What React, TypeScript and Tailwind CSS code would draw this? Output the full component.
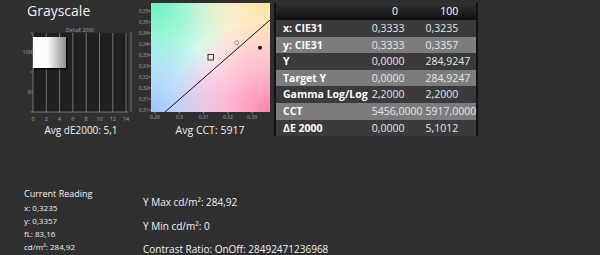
import React from 'react';

const rows: { label: string; a: string; b: string }[] = [
    { label: 'x: CIE31', a: '0,3333', b: '0,3235' },
    { label: 'y: CIE31', a: '0,3333', b: '0,3357' },
    { label: 'Y', a: '0,0000', b: '284,9247' },
    { label: 'Target Y', a: '0,0000', b: '284,9247' },
    { label: 'Gamma Log/Log', a: '2,2000', b: '2,2000' },
    { label: 'CCT', a: '5456,0000', b: '5917,0000' },
    { label: 'ΔE 2000', a: '0,0000', b: '5,1012' },
];

const gridX = [0, 2, 4, 6, 8, 10, 12, 14];
const cieY = ['0,35', '0,35', '0,34', '0,34', '0,33', '0,33', '0,32', '0,32', '0,31', '0,31'];
const cieX = ['0,29', '0,3', '0,31', '0,32', '0,33'];

function DeltaChart(): React.ReactElement {
    return (
        <svg width="134" height="101" viewBox="0 0 134 101" className="block">
            <defs>
                <linearGradient id="barFill" x1="0" y1="0" x2="1" y2="0">
                    <stop offset="0" stopColor="#ffffff" />
                    <stop offset="0.45" stopColor="#fbfbfb" />
                    <stop offset="1" stopColor="#8c8c8c" />
                </linearGradient>
            </defs>
            <text x="80" y="11" fontSize="5" fill="#9a9a9a" textAnchor="middle" fontFamily="Open Sans, sans-serif">
                DeltaE 2000
            </text>
            <rect x="33" y="12" width="95" height="79" fill="#1f1f1f" />
            {gridX.map((v, i) => {
                const x = 33 + i * 13.3;
                return (
                    <g key={v}>
                        <line x1={x} y1="12" x2={x} y2="91" stroke="#8a8a8a" strokeWidth="0.8" />
                        <text x={x} y="99.5" fontSize="5.5" fill="#a8a8a8" textAnchor="middle" fontFamily="Open Sans, sans-serif">
                            {v}
                        </text>
                    </g>
                );
            })}
            <line x1="131" y1="11" x2="131" y2="91" stroke="#8a8a8a" strokeWidth="0.8" />
            <line x1="33" y1="91" x2="128" y2="91" stroke="#8a8a8a" strokeWidth="0.8" />
            {[12, 31, 51, 71, 91].map((y) => (
                <line key={y} x1="30.5" y1={y} x2="33" y2={y} stroke="#8a8a8a" strokeWidth="0.8" />
            ))}
            <text x="32" y="33" fontSize="5.5" fill="#a8a8a8" textAnchor="end" fontFamily="Open Sans, sans-serif">100</text>
            <text x="31" y="73" fontSize="5.5" fill="#a8a8a8" textAnchor="end" fontFamily="Open Sans, sans-serif">0</text>
            <rect x="34" y="17" width="33.5" height="31.5" fill="#050505" />
            <rect x="33" y="16" width="33" height="31" fill="url(#barFill)" />
        </svg>
    );
}

function CieChart(): React.ReactElement {
    return (
        <svg width="140" height="122" viewBox="0 0 140 122" className="block">
            <defs>
                <radialGradient id="cTL" cx="0" cy="0" r="1">
                    <stop offset="0" stopColor="#6ef2bf" stopOpacity="1" />
                    <stop offset="0.8" stopColor="#6ef2bf" stopOpacity="0" />
                </radialGradient>
                <radialGradient id="cTR" cx="1" cy="0" r="1">
                    <stop offset="0" stopColor="#ffe2a2" stopOpacity="1" />
                    <stop offset="0.75" stopColor="#ffe2a2" stopOpacity="0" />
                </radialGradient>
                <radialGradient id="cBL" cx="0" cy="1" r="1">
                    <stop offset="0" stopColor="#a2c4ff" stopOpacity="1" />
                    <stop offset="0.7" stopColor="#a2c4ff" stopOpacity="0" />
                </radialGradient>
                <radialGradient id="cBR" cx="1" cy="1" r="1">
                    <stop offset="0" stopColor="#ff84b0" stopOpacity="1" />
                    <stop offset="0.85" stopColor="#ff84b0" stopOpacity="0" />
                </radialGradient>
                <linearGradient id="cL" x1="0" y1="0" x2="1" y2="0">
                    <stop offset="0" stopColor="#aefcf6" stopOpacity="0.6" />
                    <stop offset="0.45" stopColor="#aefcf6" stopOpacity="0" />
                </linearGradient>
            </defs>
            <rect x="17" y="3" width="119" height="109" fill="#ffffff" />
            <rect x="17" y="3" width="119" height="109" fill="url(#cL)" />
            <rect x="17" y="3" width="119" height="109" fill="url(#cTL)" />
            <rect x="17" y="3" width="119" height="109" fill="url(#cTR)" />
            <rect x="17" y="3" width="119" height="109" fill="url(#cBL)" />
            <rect x="17" y="3" width="119" height="109" fill="url(#cBR)" />
            {cieY.map((t, i) => {
                const y = 11 + i * 11;
                return (
                    <g key={i}>
                        <line x1="14.5" y1={y} x2="17" y2={y} stroke="#9a9a9a" strokeWidth="0.8" />
                        <text x="14.5" y={y + 1.8} fontSize="5" fill="#a8a8a8" textAnchor="end" fontFamily="Open Sans, sans-serif">
                            {t}
                        </text>
                    </g>
                );
            })}
            {cieX.map((t, i) => {
                const x = 21 + i * 24.3;
                return (
                    <g key={t}>
                        <line x1={x} y1="112" x2={x} y2="114" stroke="#9a9a9a" strokeWidth="0.8" />
                        <text x={x} y="118.8" fontSize="5" fill="#a8a8a8" textAnchor="middle" fontFamily="Open Sans, sans-serif">
                            {t}
                        </text>
                    </g>
                );
            })}
            <line x1="31" y1="112" x2="136" y2="20" stroke="#111111" strokeWidth="1" />
            <rect x="74" y="54.5" width="5.5" height="5.5" fill="none" stroke="#222222" strokeWidth="0.9" />
            <circle cx="102.7" cy="42.7" r="2" fill="none" stroke="#8a8a8a" strokeWidth="0.9" />
            <circle cx="126" cy="47.7" r="2" fill="#111111" />
        </svg>
    );
}

export default function App(): React.ReactElement {
    return (
        <div className="w-[600px] h-[255px] overflow-hidden bg-[#2f2f2f] text-[#f2f2f2] font-['Open_Sans',sans-serif]">
            <div className="flex items-start h-[140px]">
                <div className="w-[134px] shrink-0">
                    <div className="h-[21px] pl-[27px] pt-[2px] text-[14px] leading-[18px]">Grayscale</div>
                    <DeltaChart />
                    <div className="h-[16px] text-center text-[10px] leading-[16px] pl-[28px]">Avg dE2000: 5,1</div>
                </div>
                <div className="w-[140px] shrink-0">
                    <CieChart />
                    <div className="h-[16px] text-center text-[10.5px] leading-[16px] pl-[12px]">Avg CCT: 5917</div>
                </div>
                <table className="mt-[3px] w-[203px] border-collapse border-x-2 border-[#111111] text-[10.5px] leading-[16.6px]">
                    <thead>
                        <tr className="h-[17px] bg-gradient-to-b from-[#333333] to-[#0e0e0e]">
                            <th className="w-[96px]" />
                            <th className="w-[54px] text-center font-normal text-white">0</th>
                            <th className="w-[53px] text-center font-normal text-white">100</th>
                        </tr>
                    </thead>
                    <tbody>
                        {rows.map((r, i) => (
                            <tr
                                key={r.label}
                                className={i % 2 === 0 ? 'h-[16.6px] bg-[#3a3a3a]' : 'h-[16.6px] bg-[#7c7c7c]'}
                            >
                                <td className="pl-[7px] font-bold text-white whitespace-nowrap">{r.label}</td>
                                <td className="pl-[4px] text-[#e6e6e6] whitespace-nowrap">{r.a}</td>
                                <td className="pl-[3px] text-[#e6e6e6] whitespace-nowrap">{r.b}</td>
                            </tr>
                        ))}
                    </tbody>
                </table>
            </div>
            <div className="flex items-start">
                <div className="w-[143px] shrink-0 pl-[24px] pt-[47px]">
                    <div className="text-[9px] leading-[14px]">Current Reading</div>
                    <div className="text-[8px] leading-[13px]">
                        <div>x: 0,3235</div>
                        <div>y: 0,3357</div>
                        <div>fL: 83,16</div>
                        <div>cd/m²: 284,92</div>
                    </div>
                </div>
                <div className="pt-[51px] text-[10px] leading-[23.5px]">
                    <div>Y Max cd/m²: 284,92</div>
                    <div>Y Min cd/m²: 0</div>
                    <div>Contrast Ratio: OnOff: 28492471236968</div>
                </div>
            </div>
        </div>
    );
}
